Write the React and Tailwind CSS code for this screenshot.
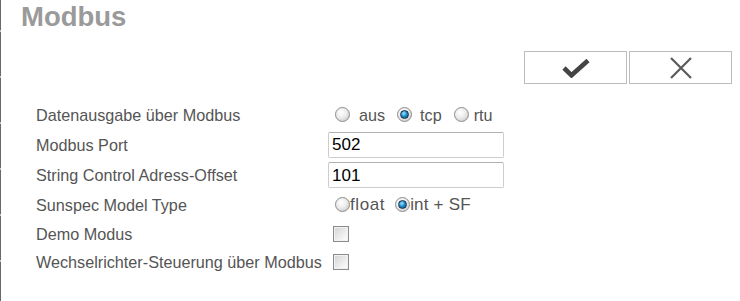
import React from "react";

const font = { fontFamily: '"Liberation Sans", Arial, sans-serif' };

function Radio({ checked }) {
  return (
    <span className="relative inline-flex h-[15px] w-[15px] shrink-0 items-center justify-center rounded-full border border-[#8c8c8c] bg-[radial-gradient(circle_at_40%_35%,#ffffff,#ececec_45%,#bdbdbd)]">
      {checked && (
        <span className="h-[9px] w-[9px] rounded-full border border-[#1a3346] bg-[radial-gradient(circle_at_40%_35%,#a6e4ff,#1e90d2_45%,#0a4670)]" />
      )}
    </span>
  );
}

function Checkbox() {
  return (
    <span className="inline-block h-[16px] w-[16px] shrink-0 border border-[#8a8a8a] bg-[linear-gradient(135deg,#d2d2d2,#ececec_55%,#ffffff)] shadow-[inset_0_0_0_1px_#f2f2f2]" />
  );
}

function Row({ label, h, children }) {
  return (
    <div className={`flex items-center ${h}`}>
      <div className="w-[292px] shrink-0 text-[16.2px] leading-[18px] text-[#555555]">{label}</div>
      <div className="flex items-center text-[16.2px] leading-[18px] text-[#555555]">{children}</div>
    </div>
  );
}

function TextInput({ value }) {
  return (
    <div className="flex h-[26px] w-[176px] items-center rounded-[2px] border border-[#cdcdcd] border-t-[#b0b0b0] bg-white pl-[3px] text-[17px] leading-none text-black">
      {value}
    </div>
  );
}

function LeftEdge() {
  const segs = [30, 44, 44, 44, 44, 44];
  return (
    <div className="flex w-px shrink-0 flex-col">
      {segs.map((s, i) => (
        <React.Fragment key={i}>
          <div className="w-px bg-[#686868]" style={{ height: s }} />
          <div className="h-[2px] w-px bg-[#c4c4c4]" />
        </React.Fragment>
      ))}
      <div className="w-px flex-1 bg-[#686868]" />
    </div>
  );
}

export default function App() {
  return (
    <div className="flex h-[301px] w-[740px] overflow-hidden bg-white" style={font}>
      <LeftEdge />
      <div className="flex flex-1 flex-col">
        <div className="pl-[20px] pt-px text-[27.5px] font-bold leading-[32px] text-[#9a9a9a]">Modbus</div>
        <div className="mt-[18px] flex justify-end pr-[8px]">
          <button className="flex h-[33px] w-[103px] items-center justify-center border border-[#bcbcbc] bg-white">
            <svg width="28" height="20" viewBox="0 0 28 20">
              <path d="M2 10 L9.5 17.3 L26 2.5" fill="none" stroke="#444444" strokeWidth="4.6" strokeLinejoin="miter" strokeLinecap="butt" />
            </svg>
          </button>
          <button className="ml-[2px] flex h-[33px] w-[103px] items-center justify-center border border-[#bcbcbc] bg-white">
            <svg width="24" height="24" viewBox="0 0 24 24">
              <path d="M2 2 L22 22 M22 2 L2 22" fill="none" stroke="#5a5a5a" strokeWidth="2.2" />
            </svg>
          </button>
        </div>
        <div className="mt-[16px] flex flex-col pl-[35px]">
          <Row label="Datenausgabe über Modbus" h="h-[29px]">
            <span className="ml-[7px] flex"><Radio /></span>
            <span className="ml-[9px]">aus</span>
            <span className="ml-[12px] flex"><Radio checked /></span>
            <span className="ml-[8px]">tcp</span>
            <span className="ml-[12px] flex"><Radio /></span>
            <span className="ml-[5px]">rtu</span>
          </Row>
          <Row label="Modbus Port" h="h-[31px]">
            <TextInput value="502" />
          </Row>
          <Row label="String Control Adress-Offset" h="h-[30px]">
            <TextInput value="101" />
          </Row>
          <Row label="Sunspec Model Type" h="h-[29px]">
            <span className="ml-[7px] flex"><Radio /></span>
            <span className="text-[17px] tracking-[0.6px]">float</span>
            <span className="ml-[10px] flex"><Radio checked /></span>
            <span className="text-[17px] tracking-[0.2px]">int + SF</span>
          </Row>
          <Row label="Demo Modus" h="h-[29px]">
            <span className="ml-[5px] flex"><Checkbox /></span>
          </Row>
          <Row label="Wechselrichter-Steuerung über Modbus" h="h-[28px]">
            <span className="ml-[5px] flex"><Checkbox /></span>
          </Row>
        </div>
      </div>
    </div>
  );
}
